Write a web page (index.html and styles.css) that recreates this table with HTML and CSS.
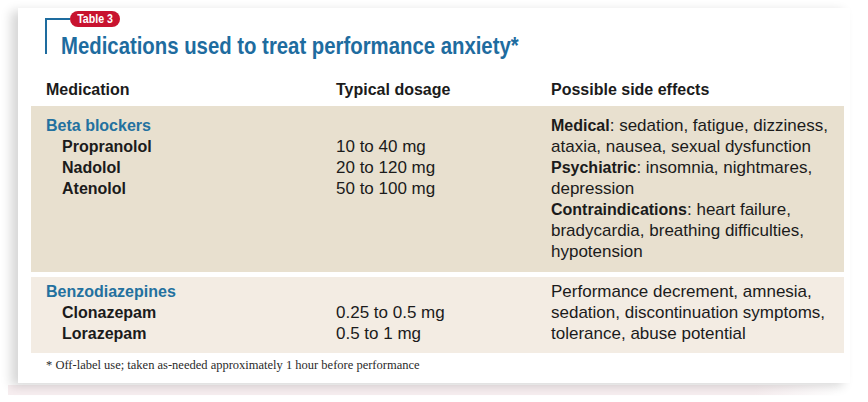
FILE: index.html
```html
<!DOCTYPE html>
<html lang="en">
<head>
<meta charset="utf-8">
<title>Table 3</title>
<link rel="stylesheet" href="styles.css">
</head>
<body>
<div class="page">
  <div class="card">
    <div class="head">
      <div class="tagline"><span class="rule"></span><span class="pill"><span class="pill-text">Table 3</span></span></div>
      <h1 class="title"><span class="title-text">Medications used to treat performance anxiety*</span></h1>
    </div>
    <div class="grid hdr">
      <div>Medication</div>
      <div>Typical dosage</div>
      <div>Possible side effects</div>
    </div>
    <div class="grid sec sec1">
      <div>
        <div class="cat">Beta blockers</div>
        <div class="drug">Propranolol</div>
        <div class="drug">Nadolol</div>
        <div class="drug">Atenolol</div>
      </div>
      <div class="dose">
        <div>&nbsp;</div>
        <div>10 to 40 mg</div>
        <div>20 to 120 mg</div>
        <div>50 to 100 mg</div>
      </div>
      <div class="fx">
        <div><b>Medical</b>: sedation, fatigue, dizziness,<br>ataxia, nausea, sexual dysfunction</div>
        <div><b>Psychiatric</b>: insomnia, nightmares,<br>depression</div>
        <div><b>Contraindications</b>: heart failure,<br>bradycardia, breathing difficulties,<br>hypotension</div>
      </div>
    </div>
    <div class="grid sec sec2">
      <div>
        <div class="cat">Benzodiazepines</div>
        <div class="drug">Clonazepam</div>
        <div class="drug">Lorazepam</div>
      </div>
      <div class="dose">
        <div>&nbsp;</div>
        <div>0.25 to 0.5 mg</div>
        <div>0.5 to 1 mg</div>
      </div>
      <div class="fx">
        <div>Performance decrement, amnesia,<br>sedation, discontinuation symptoms,<br>tolerance, abuse potential</div>
      </div>
    </div>
    <p class="foot">* Off-label use; taken as-needed approximately 1 hour before performance</p>
  </div>
  <div class="under"></div>
</div>
</body>
</html>
```
FILE: styles.css
```css
html, body {
  margin: 0;
  padding: 0;
  background: #ffffff;
}
.page {
  width: 868px;
  height: 402px;
  overflow: hidden;
  padding-top: 8px;
  box-sizing: border-box;
}
.card {
  margin-left: 18px;
  width: 832px;
  height: 375px;
  box-sizing: border-box;
  padding: 0 6px 0 13px;
  background: #ffffff;
  box-shadow: -7px 3px 10px rgba(0, 0, 0, 0.16);
  position: relative;
  z-index: 1;
  font-family: "Liberation Sans", Arial, sans-serif;
  font-size: 16px;
  color: #1b1b1b;
}
.under {
  margin: 2px 30px 0 8px;
  height: 10px;
  background: linear-gradient(to right, #f7eef0 0%, #f7eef0 90%, rgba(247, 238, 240, 0) 100%);
}
.head {
  margin-left: 14px;
  padding-top: 3px;
}
.tagline {
  display: flex;
  align-items: center;
  height: 16px;
}
.rule {
  width: 25px;
  height: 2px;
  background: #1e6c9f;
}
.pill {
  display: inline-flex;
  align-items: center;
  justify-content: center;
  width: 50px;
  height: 16px;
  border-radius: 8px;
  background: #c8132f;
  color: #ffffff;
  font-family: "Liberation Sans", Arial, sans-serif;
  font-weight: bold;
  font-size: 12.5px;
  line-height: 16px;
}
.pill-text {
  display: inline-block;
  transform: scaleX(0.85);
}
.title {
  margin: -9px 0 0 0;
  height: 36px;
  box-sizing: border-box;
  border-left: 2px solid #1e6c9f;
  padding: 15px 0 0 14px;
  font-family: "Liberation Sans", Arial, sans-serif;
  font-weight: bold;
  font-size: 24.5px;
  line-height: 26px;
  color: #1e6c9f;
  white-space: nowrap;
}
.title-text {
  display: inline-block;
  transform: scaleX(0.83);
  transform-origin: left center;
}
.grid {
  display: grid;
  grid-template-columns: 290px 215px 1fr;
  padding-left: 15px;
  line-height: 21px;
}
.hdr {
  margin-top: 25px;
  margin-bottom: 6px;
  font-weight: bold;
}
.sec {
  white-space: nowrap;
}
.sec1 {
  background: #e8e0cf;
  padding: 9px 0 10px 15px;
}
.sec2 {
  background: #f3ece3;
  margin-top: 5px;
  padding: 4px 0 9px 15px;
}
.cat {
  color: #23719f;
  font-weight: bold;
}
.drug {
  font-weight: bold;
  padding-left: 16px;
}
.dose,
.fx {
  font-size: 17px;
}
.fx b {
  font-weight: bold;
  font-size: 16px;
}
.foot {
  margin: 4px 0 0 15px;
  font-family: "Liberation Serif", "Times New Roman", serif;
  font-size: 12.5px;
  line-height: 16px;
  color: #2a2a2a;
}
```
